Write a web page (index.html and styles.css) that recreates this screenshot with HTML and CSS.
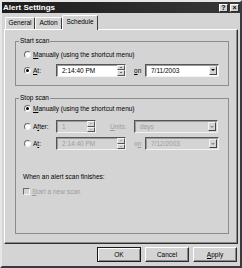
FILE: index.html
```html
<!DOCTYPE html>
<html lang="en">
<head>
<meta charset="UTF-8">
<title>Alert Settings</title>
<link rel="stylesheet" href="styles.css">
</head>
<body>

<div class="window">
    <div class="titlebar">
        <span class="title">Alert Settings</span>
        <span class="caption-btn">?</span>
        <span class="caption-btn close">&times;</span>
    </div>

    <div class="tabs">
        <span class="tab general">General</span>
        <span class="tab action">Action</span>
        <span class="tab schedule active">Schedule</span>
    </div>

    <div class="panel">
        <fieldset class="group">
            <legend>Start scan</legend>
            <div class="group-body start-body">
                <div class="row">
                    <span class="radio"></span>
                    <span class="label"><u>M</u>anually (using the shortcut menu)</span>
                </div>
                <div class="row field-row">
                    <span class="radio checked"></span>
                    <span class="label short"><u>A</u>t:</span>
                    <div class="edit time">
                        <span class="value">2:14:40 PM</span>
                        <span class="spin"><i class="up"></i><i class="down"></i></span>
                    </div>
                    <span class="label on"><u>o</u>n</span>
                    <div class="edit combo date">
                        <span class="value">7/11/2003</span>
                        <span class="drop"></span>
                    </div>
                </div>
            </div>
        </fieldset>

        <fieldset class="group stop">
            <legend>Stop scan</legend>
            <div class="group-body stop-body">
                <div class="row">
                    <span class="radio checked"></span>
                    <span class="label"><u>M</u>anually (using the shortcut menu)</span>
                </div>
                <div class="row field-row after-row">
                    <span class="radio"></span>
                    <span class="label short">A<u>f</u>ter:</span>
                    <div class="edit number disabled">
                        <span class="value">1</span>
                        <span class="spin"><i class="up"></i><i class="down"></i></span>
                    </div>
                    <span class="label units disabled-text"><u>U</u>nits:</span>
                    <div class="edit combo units-box disabled">
                        <span class="value">days</span>
                        <span class="drop"></span>
                    </div>
                </div>
                <div class="row field-row at-row">
                    <span class="radio"></span>
                    <span class="label short">A<u>t</u>:</span>
                    <div class="edit time disabled">
                        <span class="value">2:14:40 PM</span>
                        <span class="spin"><i class="up"></i><i class="down"></i></span>
                    </div>
                    <span class="label on disabled-text">o<u>n</u></span>
                    <div class="edit combo date disabled">
                        <span class="value">7/12/2003</span>
                        <span class="drop"></span>
                    </div>
                </div>
                <div class="finish-text">When an alert scan finishes:</div>
                <div class="row check-row">
                    <span class="checkbox"></span>
                    <span class="label disabled-text"><u>S</u>tart a new scan</span>
                </div>
            </div>
        </fieldset>
    </div>

    <div class="buttons">
        <span class="btn default">OK</span>
        <span class="btn">Cancel</span>
        <span class="btn"><u>A</u>pply</span>
    </div>
</div>

</body>
</html>
```

FILE: styles.css
```css
* {
  box-sizing: border-box;
}

body {
  margin: 0;
  font-family: "Liberation Sans", Arial, sans-serif;
  font-size: 6.5px;
  color: #000;
  background-color: #d4d4d4;
}

u {
  text-decoration-thickness: 0.5px;
  text-underline-offset: 1px;
}

.window {
  width: 242px;
  height: 268px;
  display: flex;
  flex-direction: column;
  background-color: #d4d4d4;
  border: 2px solid;
  border-color: #e6e6e6 #3a3a3a #3a3a3a #e6e6e6;
}

/* title bar */
.titlebar {
  height: 11px;
  display: flex;
  align-items: center;
  padding: 0 1px 0 1px;
  background: linear-gradient(to right, #1c1c1c, #383838);
}

.title {
  flex: 1;
  color: #fff;
  font-weight: bold;
  font-size: 8px;
  line-height: 11px;
}

.caption-btn {
  width: 9px;
  height: 8px;
  margin-left: 2px;
  background-color: #d4d4d4;
  border: 1px solid;
  border-color: #fff #2a2a2a #2a2a2a #fff;
  font-size: 7px;
  font-weight: bold;
  line-height: 6px;
  text-align: center;
}

/* tabs */
.tabs {
  height: 14px;
  margin-top: 2px;
  padding-left: 3px;
  display: flex;
  align-items: flex-end;
}

.tab {
  height: 12px;
  border: 1px solid;
  border-bottom: none;
  border-color: #fff #3a3a3a #3a3a3a #fff;
  border-radius: 2px 2px 0 0;
  line-height: 10px;
  text-align: center;
}

.general { width: 30px; }
.action { width: 27px; }

.schedule {
  width: 36px;
  height: 15px;
  margin-bottom: -1px;
  line-height: 12px;
  position: relative;
  z-index: 1;
  background-color: #d4d4d4;
}

/* tab panel */
.panel {
  height: 215px;
  margin: 0 2px 0 2px;
  padding: 7px 8px 9px 10px;
  border: 1px solid;
  border-color: #fff #2e2e2e #2e2e2e #fff;
  box-shadow: inset -1px -1px 0 #8a8a8a;
}

.group {
  margin: 0;
  padding: 0;
  border: 1px solid #8c8c8c;
  min-width: 0;
}

.group legend {
  margin-left: 3px;
  padding: 0 1px;
  line-height: 8px;
}

.stop {
  margin-top: 8px;
}

.group-body {
  padding: 3px 8px 8px 8px;
}

.stop-body {
  padding: 0 8px 37px 8px;
}

.row {
  height: 12px;
  display: flex;
  align-items: center;
}

.field-row {
  height: 14px;
  margin-top: 3px;
}

.after-row {
  height: 13px;
  margin-top: 6px;
}

.at-row {
  height: 13px;
  margin-top: 4px;
}

.label {
  margin-left: 2px;
  white-space: nowrap;
}

.short {
  width: 23px;
}

.on {
  width: 11px;
  margin-left: 8px;
}

.units {
  width: 24px;
  margin-left: 14px;
}

.disabled-text {
  color: #9c9c9c;
}

.finish-text {
  height: 8px;
  margin-top: 23px;
  margin-left: -1px;
  line-height: 8px;
}

.check-row {
  height: 10px;
  margin-top: 5px;
}

/* radio buttons and check boxes */
.radio {
  width: 7px;
  height: 7px;
  flex: none;
  border-radius: 50%;
  background-color: #fff;
  border: 1px solid;
  border-color: #6a6a6a #efefef #efefef #6a6a6a;
  display: flex;
  align-items: center;
  justify-content: center;
}

.radio.checked::after {
  content: "";
  width: 3px;
  height: 3px;
  border-radius: 50%;
  background-color: #000;
}

.checkbox {
  width: 7px;
  height: 7px;
  flex: none;
  margin-left: -1px;
  background-color: #d4d4d4;
  border: 1px solid;
  border-color: #6a6a6a #f2f2f2 #f2f2f2 #6a6a6a;
}

/* edit boxes */
.edit {
  height: 13px;
  display: flex;
  align-items: stretch;
  background-color: #fff;
  border: 1px solid;
  border-color: #555 #f2f2f2 #f2f2f2 #555;
  box-shadow: inset 1px 1px 0 #9a9a9a;
}

.edit.disabled {
  background-color: #d4d4d4;
  color: #9c9c9c;
}

.edit .value {
  flex: 1;
  padding-left: 5px;
  line-height: 11px;
  white-space: nowrap;
}

.time { width: 70px; }
.date { width: 74px; }
.number { width: 40px; }
.units-box { width: 84px; }

.spin {
  width: 8px;
  display: flex;
  flex-direction: column;
}

.spin i {
  flex: 1;
  background-color: #d4d4d4;
  border: 1px solid;
  border-color: #f2f2f2 #555 #555 #f2f2f2;
  display: flex;
  align-items: center;
  justify-content: center;
}

.spin .up::after,
.spin .down::after {
  content: "";
  border-left: 1.5px solid transparent;
  border-right: 1.5px solid transparent;
}

.spin .up::after {
  border-bottom: 1.5px solid #000;
}

.spin .down::after {
  border-top: 1.5px solid #000;
}

.disabled .spin .up::after {
  border-bottom-color: #8c8c8c;
}

.disabled .spin .down::after {
  border-top-color: #8c8c8c;
}

.drop {
  width: 8px;
  margin: 1px 1px 1px 0;
  background-color: #d4d4d4;
  border: 1px solid;
  border-color: #f2f2f2 #444 #444 #f2f2f2;
  display: flex;
  align-items: center;
  justify-content: center;
}

.drop::after {
  content: "";
  border-left: 2px solid transparent;
  border-right: 2px solid transparent;
  border-top: 2px solid #000;
}

.disabled .drop::after {
  border-top-color: #8c8c8c;
}

/* dialog buttons */
.buttons {
  margin-top: 3px;
  padding-right: 3px;
  display: flex;
  justify-content: flex-end;
  gap: 4px;
}

.btn {
  width: 44px;
  height: 15px;
  border: 1px solid;
  border-color: #fff #2e2e2e #2e2e2e #fff;
  box-shadow: inset -1px -1px 0 #8a8a8a;
  line-height: 13px;
  text-align: center;
}

.btn.default {
  border: 1px solid #1a1a1a;
  box-shadow: inset 1px 1px 0 #fff, inset -1px -1px 0 #8a8a8a;
}
```
